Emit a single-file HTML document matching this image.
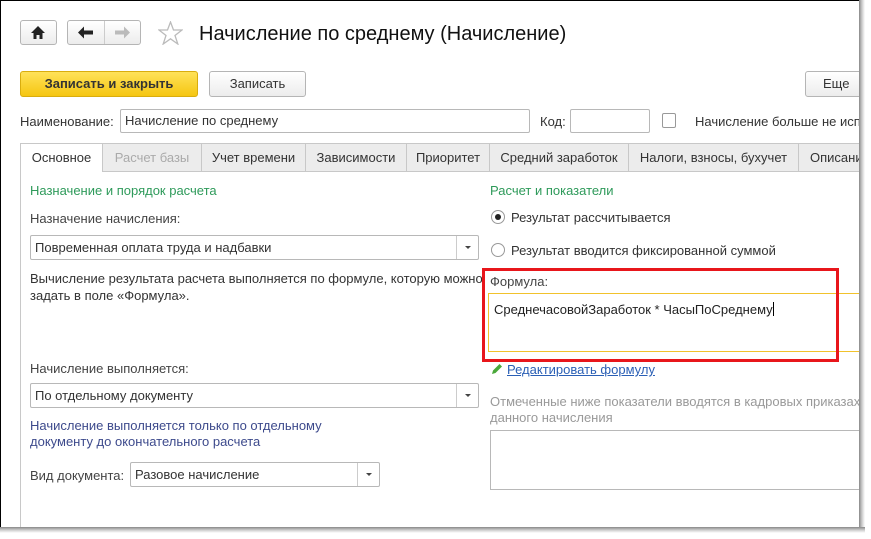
<!DOCTYPE html>
<html><head><meta charset="utf-8"><style>
*{box-sizing:border-box;margin:0;padding:0}
body{width:871px;height:539px;background:#fff;position:relative;overflow:hidden;font-family:"Liberation Sans",Arial,sans-serif;font-size:13px;color:#333}
.a{position:absolute;white-space:nowrap}
.btn{position:absolute;border:1px solid #b5b5b5;border-radius:3px;background:linear-gradient(#fff,#ececec);text-align:center}
.inp{position:absolute;border:1px solid #b8b8b8;border-radius:2px;background:#fff;padding-left:4px}
.sel .dd{position:absolute;right:0;top:0;bottom:0;width:22px;border-left:1px solid #ccc}
.sel .dd:after{content:"";position:absolute;left:8px;top:10px;border:3px solid transparent;border-top:3px solid #444}
.tab{position:absolute;top:143px;height:29px;border:1px solid #c8c8c8;border-left:none;background:#ececec;line-height:27px;text-align:center;color:#333}
.g{color:#2e9a5a}
#clip{position:absolute;left:0;top:0;width:860px;height:528px;overflow:hidden}
</style></head><body>
<div id="clip">
<div class="a" style="left:0;top:0;width:1px;height:528px;background:#000"></div>
<div class="a" style="left:0;top:0;width:860px;height:1px;background:#000"></div>

<div class="btn" style="left:20px;top:20px;width:37px;height:25px"></div>
<svg class="a" style="left:31px;top:26px" width="14" height="13" viewBox="0 0 14 13"><path d="M7 0 L14 7 H11.5 V13 H8.5 V9 H5.5 V13 H2.5 V7 H0 Z" fill="#222"/></svg>
<div class="btn" style="left:67px;top:20px;width:74px;height:25px"></div>
<div class="a" style="left:104px;top:21px;width:1px;height:23px;background:#ccc"></div>
<svg class="a" style="left:78px;top:26px" width="16" height="13" viewBox="0 0 16 13"><path d="M0 6.5 L6 0.5 V4.5 H15 V8.5 H6 V12.5 Z" fill="#222"/></svg>
<svg class="a" style="left:114px;top:26px" width="16" height="13" viewBox="0 0 16 13"><path d="M16 6.5 L10 0.5 V4.5 H1 V8.5 H10 V12.5 Z" fill="#bbb"/></svg>
<svg class="a" style="left:158px;top:21px" width="25" height="24" viewBox="0 0 25 24"><path d="M12.5 1 L15.5 9 L24 9 L17 14.5 L19.8 23 L12.5 17.8 L5.2 23 L8 14.5 L1 9 L9.5 9 Z" fill="none" stroke="#bbb" stroke-width="1.3"/></svg>
<div class="a" style="left:199px;top:23px;font-size:20px;color:#111">Начисление по среднему (Начисление)</div>

<div class="btn" style="left:20px;top:71px;width:178px;height:26px;line-height:24px;background:linear-gradient(#ffe259,#f5c612);border-color:#d9ad0e;font-weight:bold;color:#333">Записать и закрыть</div>
<div class="btn" style="left:209px;top:71px;width:97px;height:26px;line-height:24px">Записать</div>
<div class="btn" style="left:805px;top:71px;width:60px;height:26px;line-height:24px;text-align:left;padding-left:17px">Еще</div>

<div class="a" style="left:20px;top:114px">Наименование:</div>
<div class="inp" style="left:120px;top:109px;width:410px;height:24px;line-height:22px">Начисление по среднему</div>
<div class="a" style="left:540px;top:114px">Код:</div>
<div class="inp" style="left:570px;top:109px;width:80px;height:24px"></div>
<div class="a" style="left:662px;top:113px;width:14px;height:15px;border:1px solid #999;border-radius:2px"></div>
<div class="a" style="left:695px;top:114px">Начисление больше не испо</div>

<div class="tab" style="left:20px;width:83px;background:#fff;border-left:1px solid #c8c8c8;border-bottom:none">Основное</div>
<div class="tab" style="left:103px;width:99px;color:#aaa">Расчет базы</div>
<div class="tab" style="left:202px;width:104px">Учет времени</div>
<div class="tab" style="left:306px;width:101px">Зависимости</div>
<div class="tab" style="left:407px;width:83px">Приоритет</div>
<div class="tab" style="left:490px;width:139px">Средний заработок</div>
<div class="tab" style="left:629px;width:170px">Налоги, взносы, бухучет</div>
<div class="tab" style="left:799px;width:70px;text-align:left;padding-left:11px">Описани</div>
<div class="a" style="left:103px;top:171px;width:760px;height:1px;background:#c8c8c8"></div>
<div class="a" style="left:20px;top:172px;width:1px;height:356px;background:#c8c8c8"></div>

<div class="a g" style="left:30px;top:183px">Назначение и порядок расчета</div>
<div class="a g" style="left:490px;top:183px">Расчет и показатели</div>

<div class="a" style="left:30px;top:211px;color:#444">Назначение начисления:</div>
<div class="inp sel" style="left:30px;top:235px;width:449px;height:25px;line-height:23px">Повременная оплата труда и надбавки<div class="dd"></div></div>
<div class="a" style="left:30px;top:270px;line-height:17px">Вычисление результата расчета выполняется по формуле, которую можно<br>задать в поле «Формула».</div>
<div class="a" style="left:30px;top:361px;color:#444">Начисление выполняется:</div>
<div class="inp sel" style="left:30px;top:383px;width:449px;height:25px;line-height:23px">По отдельному документу<div class="dd"></div></div>
<div class="a" style="left:30px;top:418px;line-height:16px;color:#3d4a8c">Начисление выполняется только по отдельному<br>документу до окончательного расчета</div>
<div class="a" style="left:30px;top:468px;color:#444">Вид документа:</div>
<div class="inp sel" style="left:130px;top:462px;width:250px;height:25px;line-height:23px">Разовое начисление<div class="dd"></div></div>

<div class="a" style="left:491px;top:210px;width:14px;height:14px;border:1px solid #999;border-radius:50%"></div>
<div class="a" style="left:495px;top:214px;width:6px;height:6px;background:#222;border-radius:50%"></div>
<div class="a" style="left:511px;top:210px">Результат рассчитывается</div>
<div class="a" style="left:491px;top:243px;width:14px;height:14px;border:1px solid #999;border-radius:50%"></div>
<div class="a" style="left:511px;top:243px">Результат вводится фиксированной суммой</div>

<div class="a" style="left:490px;top:274px;color:#444">Формула:</div>
<div class="a" style="left:488px;top:293px;width:380px;height:59px;border:1px solid #f1c22c;background:#fff"></div>
<div class="a" style="left:494px;top:302px;color:#222">СреднечасовойЗаработок * ЧасыПоСреднему<span style="display:inline-block;width:1px;height:14px;background:#000;vertical-align:-2px"></span></div>
<div class="a" style="left:482px;top:268px;width:357px;height:94px;border:3px solid #e8161b"></div>

<svg class="a" style="left:491px;top:363px" width="12" height="12" viewBox="0 0 12 12"><path d="M1 11 L2 7.5 L8.5 1 L11 3.5 L4.5 10 Z" fill="#4aa83a"/></svg>
<div class="a" style="left:507px;top:362px;color:#2a5fb5;text-decoration:underline">Редактировать формулу</div>
<div class="a" style="left:490px;top:394px;line-height:16px;color:#999">Отмеченные ниже показатели вводятся в кадровых приказах<br>данного начисления</div>
<div class="a" style="left:490px;top:430px;width:380px;height:60px;border:1px solid #b8b8b8"></div>
</div>
<div class="a" style="left:859px;top:0;width:6px;height:532px;background:linear-gradient(90deg,#888,#ccc,#fff)"></div>
<div class="a" style="left:0;top:527px;width:865px;height:6px;background:linear-gradient(#888,#ccc,#fff)"></div>
</body></html>
